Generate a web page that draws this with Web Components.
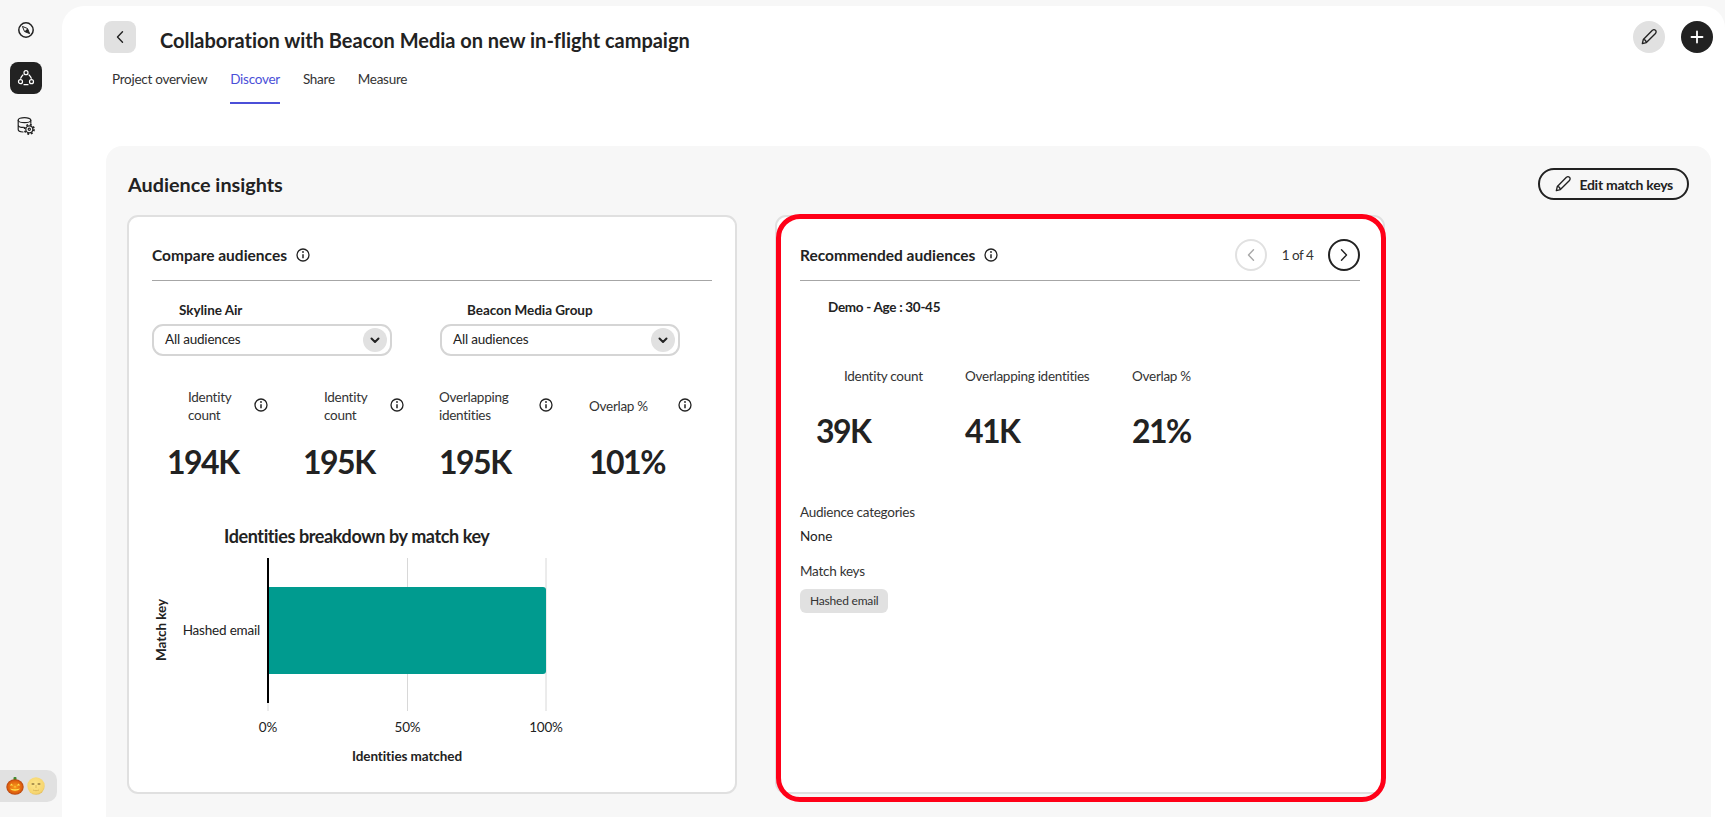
<!DOCTYPE html>
<html lang="en">
<head>
<meta charset="utf-8">
<title>Audience insights</title>
<style>
html,body{margin:0;height:817px;overflow:hidden;background:#f7f7f7}
body{font-family:Lato,"Open Sans",sans-serif;color:#222;font-size:14px}
</style>
</head>
<body>
<app-shell>
  <app-rail slot="rail"></app-rail>
  <project-header slot="header" title-text="Collaboration with Beacon Media on new in-flight campaign"></project-header>
  <tab-bar slot="tabs"></tab-bar>
  <insights-panel slot="panel">
    <compare-card></compare-card>
    <recommended-card highlight></recommended-card>
  </insights-panel>
</app-shell>

<script>
const ICON = {
  info:`<svg width="14" height="14" viewBox="0 0 14 14" fill="none" stroke="#222" stroke-width="1.3"><circle cx="7" cy="7" r="6"/><path d="M7 6.2V10.2" stroke-width="1.5"/><circle cx="7" cy="4" r=".9" fill="#222" stroke="none"/></svg>`,
  pencil:`<svg width="18" height="18" viewBox="0 0 20 20" fill="none" stroke="#222" stroke-width="1.5" stroke-linejoin="round"><path d="M2.6 17.4l1.1-4.7L13.8 2.6a2.3 2.3 0 0 1 3.4 0 2.4 2.4 0 0 1 0 3.4L7.1 16.2z"/><path d="M3.7 12.7c1.6.2 3.100 1.800 3.400 3.500"/></svg>`,
  left:c=>`<svg width="14" height="14" viewBox="0 0 14 14" fill="none" stroke="${c}" stroke-width="1.4" stroke-linecap="round" stroke-linejoin="round"><path d="M9.500 1.800L4.500 7l5 5.200"/></svg>`,
  right:c=>`<svg width="14" height="14" viewBox="0 0 14 14" fill="none" stroke="${c}" stroke-width="1.4" stroke-linecap="round" stroke-linejoin="round"><path d="M4.500 1.800L9.500 7l-5 5.200"/></svg>`
};

function component(tag, html){
  customElements.define(tag, class extends HTMLElement{
    connectedCallback(){
      if(this.shadowRoot) return;
      const root = this.attachShadow({mode:'open'});
      root.innerHTML = typeof html === 'function' ? html(this) : html;
    }
  });
}

component('app-shell',`
<style>
:host{display:flex;height:817px;background:#f7f7f7}
.main{flex:1;min-width:0;margin-top:6px;background:#fff;border-radius:22px 22px 0 0;display:flex;flex-direction:column;padding:15px 14px 0 44px;box-sizing:border-box;height:811px}
</style>
<slot name="rail"></slot>
<div class="main"><slot name="header"></slot><slot name="tabs"></slot><slot name="panel"></slot></div>`);

component('app-rail',`
<style>
:host{display:flex;flex-direction:column;width:62px;flex:none;padding-top:14px;box-sizing:border-box;height:817px}
.item{width:32px;height:32px;margin:0 0 16px 10px;border-radius:8px;display:flex;align-items:center;justify-content:center}
.on{background:#222}
.pill{margin-top:auto;margin-bottom:15px;width:57px;height:32px;background:#e1e1e1;border-radius:0 10px 10px 0;display:flex;align-items:center;padding-left:6px;box-sizing:border-box;gap:3px}
</style>
<div class="item"><svg width="18" height="18" viewBox="0 0 18 18" fill="none"><circle cx="9" cy="9" r="7.200" stroke="#222" stroke-width="1.500"/><path d="M5.400 5.400L10.500 7.500 12.600 12.600 7.500 10.500z" stroke="#222" stroke-width="1" stroke-linejoin="round"/><path d="M10.500 7.500L12.600 12.600 7.500 10.500z" fill="#222"/></svg></div>
<div class="item on"><svg width="32" height="32" viewBox="0 0 32 32" fill="none" stroke="#fff" stroke-width="1.200" stroke-linecap="round"><circle cx="16" cy="10.700" r="2"/><circle cx="10.500" cy="19.700" r="2"/><circle cx="21.500" cy="19.700" r="2"/><path d="M10.700 16.300C11.100 15 11.800 14 12.900 13M21.300 16.300C20.900 15 20.200 14 19.100 13M14 22.700H18"/></svg></div>
<div class="item"><svg width="20" height="20" viewBox="0 0 20 20" fill="none" stroke="#222" stroke-width="1.200" stroke-linecap="round" stroke-linejoin="round"><ellipse cx="8.500" cy="4.200" rx="6.300" ry="2.500"/><path d="M2.200 4.200V13.500c0 1.300 2 2.300 4.800 2.500M14.800 4.200V7.500M2.200 8.900c0 1.300 2.400 2.500 5.500 2.500"/><circle cx="13.300" cy="13.300" r="5.800" fill="#f7f7f7" stroke="none"/><circle cx="13.300" cy="13.300" r="3.500"/><circle cx="13.300" cy="13.300" r="1.100"/><circle cx="13.300" cy="13.300" r="4.700" stroke-width="1.800" stroke-dasharray="1.900 1.790" stroke-linecap="butt"/></svg></div>
<div class="pill">
<svg width="18" height="18" viewBox="0 0 18 18"><defs><radialGradient id="p" cx=".5" cy=".5" r=".6"><stop offset="0" stop-color="#f9a01b"/><stop offset=".65" stop-color="#e0600f"/><stop offset="1" stop-color="#8a2b10"/></radialGradient></defs><rect x="7.500" y="0" width="3" height="3.500" rx="1" fill="#3f8a2e"/><ellipse cx="9" cy="10" rx="8.700" ry="7.700" fill="url(#p)"/><path d="M5.500 6.500l1.700 2H3.800zM12.500 6.500l1.700 2h-3.400zM9 9l1 1.200H8z" fill="#ffe14d"/><path d="M4 11.500c2 3 8 3 10 0-2.500 1-7.500 1-10 0z" fill="#ffe14d"/></svg>
<svg width="18" height="18" viewBox="0 0 18 18"><defs><radialGradient id="m" cx=".45" cy=".4" r=".65"><stop offset="0" stop-color="#fde68a"/><stop offset=".8" stop-color="#f6d56f"/><stop offset="1" stop-color="#d9b255"/></radialGradient></defs><circle cx="9" cy="9" r="8.700" fill="url(#m)"/><ellipse cx="6" cy="7" rx="1.600" ry="1.100" fill="#a58c4a"/><ellipse cx="12" cy="7" rx="1.600" ry="1.100" fill="#a58c4a"/><path d="M9 8v3M6 13c2 .9 4 .9 6 0" stroke="#dcb95a" fill="none"/></svg>
</div>`);

component('project-header',el=>`
<style>
:host{display:flex;align-items:flex-start;margin-left:-2px;margin-right:-2px;height:32px}
.back{width:32px;height:32px;background:#e1e1e1;border-radius:8px;display:flex;align-items:center;justify-content:center}
h1{margin:5px 0 0 24px;font-size:20px;line-height:28px;font-weight:700;color:#222;flex:1;letter-spacing:-.02px}
.round{width:32px;height:32px;border-radius:50%;display:flex;align-items:center;justify-content:center;margin-left:16px}
.g{background:#e1e1e1}.d{background:#222}
</style>
<div class="back">${ICON.left('#222')}</div>
<h1>${el.getAttribute('title-text')}</h1>
<div class="round g">${ICON.pencil}</div>
<div class="round d"><svg width="14" height="14" viewBox="0 0 14 14" stroke="#fff" stroke-width="1.800" stroke-linecap="round"><path d="M7 1.500v11M1.500 7h11"/></svg></div>`);

component('tab-bar',`
<style>
:host{display:flex;gap:23px;margin:17px 0 42px 6px}
span{font-size:13.500px;letter-spacing:-.27px;line-height:18px;padding-bottom:14px;color:#333;height:18px}
.on{color:#4b4fd8;border-bottom:2px solid #4b4fd8}
</style>
<span>Project overview</span><span class="on">Discover</span><span>Share</span><span>Measure</span>`);

component('insights-panel',`
<style>
:host{display:block;flex:1;background:#f7f7f7;border-radius:16px 16px 0 0;padding:22px 22px 0 21px;min-height:0}
.top{display:flex;justify-content:space-between;align-items:center;height:32px;margin-left:1px}
h2{margin:0;font-size:19.800px;font-weight:700;color:#222}
.btn{height:32px;box-sizing:border-box;border:2px solid #222;border-radius:16px;display:flex;align-items:center;gap:7px;padding:0 14px;font-size:14px;letter-spacing:-.27px;font-weight:700;color:#222}
.cards{display:flex;gap:38px;margin-top:15px}
</style>
<div class="top"><h2>Audience insights</h2><div class="btn">${ICON.pencil}<span>Edit match keys</span></div></div>
<div class="cards"><slot></slot></div>`);

component('card-head',`
<style>
:host{display:flex;align-items:center;height:32px;padding:22px 0 9px;border-bottom:1px solid #a6a6a6}
.t{font-size:15.500px;font-weight:700;color:#222}
.i{display:flex;margin-left:9px}
.end{margin-left:auto;display:flex;align-items:center}
</style>
<div class="t"><slot></slot></div><div class="i">${ICON.info}</div><div class="end"><slot name="end"></slot></div>`);

component('select-box',el=>`
<style>
:host{display:block;width:240px}
.l{font-size:13.500px;line-height:18px;font-weight:700;padding-left:27px;margin-bottom:5px;color:#222;letter-spacing:-.05px}
.b{height:32px;box-sizing:border-box;border:2px solid #d5d5d5;border-radius:11px;display:flex;align-items:center;justify-content:space-between;padding:0 3px 0 11px;font-size:13.500px;letter-spacing:-.2px;color:#222;background:#fff}
.b span:first-child{margin-top:-3px}
.c{width:24px;height:24px;border-radius:50%;background:#e1e1e1;display:flex;align-items:center;justify-content:center}
</style>
<div class="l">${el.getAttribute('label')}</div>
<div class="b"><span>All audiences</span><span class="c"><svg width="12" height="12" viewBox="0 0 12 12" fill="none" stroke="#222" stroke-width="2" stroke-linecap="round" stroke-linejoin="round"><path d="M2.500 4.500L6 8l3.500-3.500"/></svg></span></div>`);

component('metric-cell',el=>{
  const lab = el.getAttribute('label'), pad = el.getAttribute('pad')||0, w = el.getAttribute('w');
  const info = el.hasAttribute('info');
  return `
<style>
:host{display:block}
.r{display:flex;align-items:center;padding-left:${pad}px;height:${info?36:18}px}
.l{font-size:13.500px;letter-spacing:-.27px;line-height:18.500px;color:#333;${w?`width:${w}px;`:'white-space:nowrap;'}}
.i{display:flex;margin-top:-3px}
.n{font-size:32px;font-weight:700;line-height:44px;color:#222;letter-spacing:-1.500px;margin-top:${info?16:24}px;white-space:nowrap}
</style>
<div class="r"><div class="l">${lab}</div>${info?`<div class="i">${ICON.info}</div>`:''}</div>
<div class="n">${el.getAttribute('value')}</div>`;});

component('breakdown-chart',`
<style>
:host{display:block;margin-top:36px;height:250px}
svg{display:block;overflow:visible}
text{font-family:Lato,"Open Sans",sans-serif;fill:#222;dominant-baseline:central}
.tick{font-size:13.500px;letter-spacing:-.2px;text-anchor:middle}
.ax{font-size:13.500px;font-weight:700;text-anchor:middle;letter-spacing:-.08px}
</style>
<svg width="560" height="250" viewBox="0 0 560 250">
<text x="72" y="16" font-size="18" font-weight="700" letter-spacing="-.4">Identities breakdown by match key</text>
<path d="M255.500 38V191M394 38V191M116 183V191" stroke="#d8d8d8" fill="none"/>
<rect x="115" y="38" width="2" height="145" fill="#000"/>
<path d="M117 67H391a3 3 0 0 1 3 3V151a3 3 0 0 1-3 3H117z" fill="#009b8f"/>
<text class="tick" x="116" y="207">0%</text>
<text class="tick" x="255.500" y="207">50%</text>
<text class="tick" x="394" y="207">100%</text>
<text x="108" y="110" font-size="13.500" letter-spacing="-.2" text-anchor="end">Hashed email</text>
<text class="ax" x="255" y="236">Identities matched</text>
<text class="ax" transform="translate(8.500 110) rotate(-90)">Match key</text>
</svg>`);

const cardStyle = `
:host{display:block;position:relative;width:610px;height:579px;box-sizing:border-box;background:#fff;border:2px solid #e0e0e0;border-radius:11px;padding:0 23px}
`;

component('compare-card',`
<style>${cardStyle}
.sel{display:flex;gap:48px;margin-top:20px}
.met{display:grid;grid-template-columns:136px 136px 150px 123px;margin:32px 0 0 15px}
</style>
<card-head>Compare audiences</card-head>
<div class="sel"><select-box label="Skyline Air"></select-box><select-box label="Beacon Media Group"></select-box></div>
<div class="met">
<metric-cell info label="Identity count" pad="21" w="66" value="194K"></metric-cell>
<metric-cell info label="Identity count" pad="21" w="66" value="195K"></metric-cell>
<metric-cell info label="Overlapping identities" w="100" value="195K"></metric-cell>
<metric-cell info label="Overlap %" w="89" value="101%"></metric-cell>
</div>
<breakdown-chart></breakdown-chart>`);

component('pager-control',`
<style>
:host{display:flex;align-items:center}
.c{width:32px;height:32px;box-sizing:border-box;border-radius:50%;display:flex;align-items:center;justify-content:center;background:#fff}
.p{border:2px solid #e1e1e1}.n{border:2px solid #222}
span{font-size:13.500px;letter-spacing:-.5px;width:61px;text-align:center;color:#333}
</style>
<div class="c p">${ICON.left('#a8a8a8')}</div><span>1 of 4</span><div class="c n">${ICON.right('#222')}</div>`);

component('recommended-card',`
<style>${cardStyle}
:host{overflow:visible}
.ring{position:absolute;left:-1px;top:-3px;right:-3px;bottom:-10px;border:5px solid #ff0018;border-radius:24px;pointer-events:none}
.demo{font-size:13.500px;letter-spacing:-.3px;line-height:18px;font-weight:700;padding-left:28px;margin-top:17px;color:#222}
.met{display:grid;grid-template-columns:149px 167px 100px;margin:51px 0 0 16px}
.k{font-size:13.500px;letter-spacing:-.25px;line-height:18px;color:#333}
.v{font-size:13.500px;line-height:18px;color:#222;margin-top:6px}
.cat{margin-top:50px}
.mk{margin-top:17px}
.chip{display:inline-block;margin-top:9px;height:24px;line-height:24px;padding:0 10px;background:#e1e1e1;border-radius:6px;font-size:12px;letter-spacing:-.2px;color:#333}
</style>
<card-head>Recommended audiences<pager-control slot="end"></pager-control></card-head>
<div class="demo">Demo - Age : 30-45</div>
<div class="met">
<metric-cell label="Identity count" pad="28" value="39K"></metric-cell>
<metric-cell label="Overlapping identities" value="41K"></metric-cell>
<metric-cell label="Overlap %" value="21%"></metric-cell>
</div>
<div class="cat"><div class="k">Audience categories</div><div class="v">None</div></div>
<div class="mk"><div class="k">Match keys</div><div class="chip">Hashed email</div></div>
<div class="ring"></div>`);
</script>
</body>
</html>
